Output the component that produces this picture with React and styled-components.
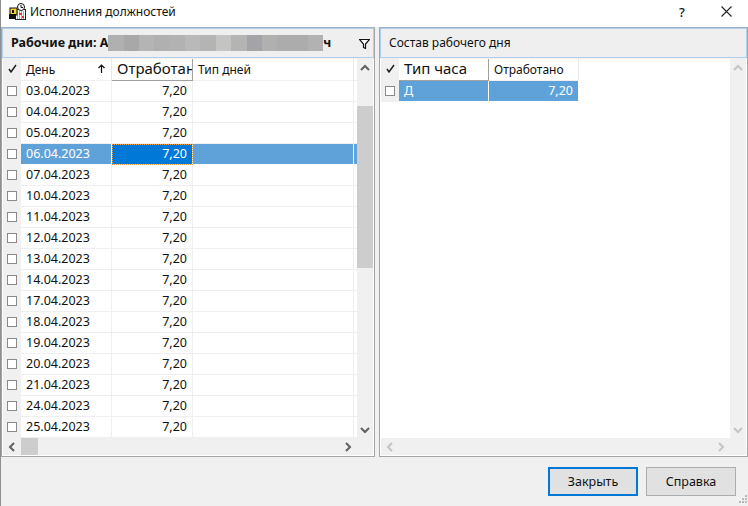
import React from "react";
import styled, { createGlobalStyle } from "styled-components";

const GlobalStyle = createGlobalStyle`
  html, body {
    margin: 0;
    padding: 0;
    background: #f0f0f0;
  }
  * {
    box-sizing: border-box;
  }
`;

const Window = styled.div`
  width: 748px;
  height: 506px;
  display: flex;
  flex-direction: column;
  overflow: hidden;
  background: #f0f0f0;
  border-left: 1px solid #8f8f8f;
  font-family: "Noto Sans", "Open Sans", sans-serif;
  font-size: 12.5px;
  color: #111;
`;

const TitleBar = styled.div`
  height: 27px;
  flex: none;
  display: flex;
  align-items: center;
  background: #fff;
  padding: 0 0 4px 8px;
`;

const TitleText = styled.span`
  margin-left: 4px;
  font-size: 12px;
`;

const TitleButton = styled.div`
  display: flex;
  align-items: center;
  justify-content: center;
  width: 12px;
  margin-right: ${(p) => p.$gap}px;
  font-size: 13px;
  font-weight: 500;
`;

const TitleSpacer = styled.div`
  flex: 1;
`;

const Panels = styled.div`
  height: 429px;
  flex: none;
  display: grid;
  grid-template-columns: 374px 369px;
  column-gap: 4px;
`;

const Panel = styled.div`
  display: flex;
  flex-direction: column;
  border: 1px solid #a5a5a5;
  border-top-color: #a0b0c0;
  background: #f0f0f0;
  min-width: 0;
`;

const PanelHeader = styled.div`
  height: 30px;
  flex: none;
  display: flex;
  align-items: center;
  padding: 0 3px 1px 8px;
  background: #efefef;
  border: 1px solid #afcfee;
  font-weight: ${(p) => (p.$bold ? 700 : 400)};
  font-size: ${(p) => (p.$bold ? 12.5 : 12)}px;
`;

const Redacted = styled.div`
  display: flex;
  width: 215px;
  height: 16px;
  flex: none;
`;

const Blur = styled.div`
  flex: 1;
`;

const HeaderEnd = styled.div`
  margin-left: auto;
  display: flex;
  padding-top: 2px;
`;

const GridArea = styled.div`
  flex: 1;
  display: grid;
  grid-template-columns: 1fr 16px;
  grid-template-rows: 1fr 17px;
  margin-top: 1px;
  min-height: 0;
  border: 1px solid #fff;
  border-top: none;
`;

const TableBox = styled.div`
  background: #fff;
  overflow: hidden;
  min-height: 0;
`;

const Row = styled.div`
  display: grid;
  grid-template-columns: ${(p) => p.$cols};
  height: ${(p) => p.$height || 21}px;
`;

const CheckCell = styled.div`
  background: #f0f0f0;
  display: flex;
  align-items: center;
  justify-content: center;
  padding-bottom: ${(p) => (p.$head ? 3 : 2)}px;
`;

const CheckBox = styled.div`
  width: 10px;
  height: 10px;
  background: #fff;
  border: 1px solid #8a8a8a;
`;

const HeadCell = styled.div`
  position: relative;
  display: flex;
  align-items: center;
  padding: 0 0 ${(p) => (p.$large ? 3 : 0)}px 5px;
  overflow: hidden;
  white-space: nowrap;
  background: #fff;
  font-size: ${(p) => (p.$large ? 15 : 12)}px;
  border-right: 1px solid ${(p) => (p.$sorted ? "#a0a0a0" : "#e8e8e8")};
  border-bottom: 1px solid ${(p) => (p.$sorted ? "#a0a0a0" : "#f0f0f0")};
`;

const SortArrow = styled.svg`
  position: absolute;
  right: 6px;
  top: 5px;
`;

const Cell = styled.div`
  display: flex;
  align-items: center;
  justify-content: ${(p) => (p.$right ? "flex-end" : "flex-start")};
  padding: 0 5px 2px;
  white-space: nowrap;
  overflow: hidden;
  background: ${(p) => (p.$focus ? "#0078d7" : p.$selected ? "#5fa2d9" : "#fff")};
  color: ${(p) => (p.$selected || p.$focus ? "#fff" : "#111")};
  border-right: 1px solid ${(p) => (p.$selected ? "#fff" : "#efefef")};
  border-bottom: 1px solid ${(p) => (p.$selected ? "#fff" : "#efefef")};
  outline: ${(p) => (p.$focus ? "1px dotted #f0a040" : "none")};
  outline-offset: -1px;
`;

const VScroll = styled.div`
  display: flex;
  flex-direction: column;
  align-items: stretch;
  background: #f0f0f0;
`;

const HScroll = styled.div`
  display: flex;
  align-items: stretch;
  background: #f0f0f0;
`;

const ScrollButton = styled.div`
  flex: none;
  display: flex;
  align-items: center;
  justify-content: center;
  height: ${(p) => (p.$wide ? "auto" : "17px")};
  width: ${(p) => (p.$wide ? "18px" : "auto")};
`;

const Gap = styled.div`
  flex: ${(p) => (p.$size ? `0 0 ${p.$size}px` : 1)};
`;

const Thumb = styled.div`
  flex: 0 0 ${(p) => p.$size}px;
  background: #cdcdcd;
`;

const Corner = styled.div`
  background: #f0f0f0;
`;

const Footer = styled.div`
  flex: 1;
  display: flex;
  justify-content: flex-end;
  gap: 8px;
  padding: 11px 12px 0 0;
  position: relative;
`;

const Button = styled.div`
  width: 90px;
  height: 29px;
  display: flex;
  align-items: center;
  justify-content: center;
  background: #e1e1e1;
  font-size: 12.5px;
  border: ${(p) => (p.$primary ? "2px solid #0078d7" : "1px solid #adadad")};
`;

const Grip = styled.svg`
  position: absolute;
  right: 0;
  bottom: 0;
`;

const dates = [
  "03.04.2023", "04.04.2023", "05.04.2023", "06.04.2023", "07.04.2023", "10.04.2023",
  "11.04.2023", "12.04.2023", "13.04.2023", "14.04.2023", "17.04.2023", "18.04.2023",
  "19.04.2023", "20.04.2023", "21.04.2023", "24.04.2023", "25.04.2023",
];

const blurTones = ["#b0b0b0", "#a8a8a8", "#b4b4b4", "#b0b0b0", "#b2b2b2", "#b9b9b9", "#b4b4b4", "#c4c4c2", "#b4b4b4", "#a4a4a8", "#b0b0b0", "#acacac", "#acacac", "#b2b2b2"];

const leftCols = "18px 91px 81px 161px 1fr";
const rightCols = "18px 90px 90px 1fr";

const Chevron = ({ dir, color = "#606060" }) => {
  const points = {
    up: "1,6 5,2 9,6",
    down: "1,2 5,6 9,2",
    left: "6,1 2,5 6,9",
    right: "2,1 6,5 2,9",
  }[dir];
  return (
    <svg width="10" height="10" viewBox={dir === "up" || dir === "down" ? "0 -1 10 10" : "-1 0 10 10"}>
      <polyline points={points} fill="none" stroke={color} strokeWidth="2" />
    </svg>
  );
};

const Tick = () => (
  <svg width="9" height="9" viewBox="0 0 9 9">
    <path d="M1 5 L3 8 L8 1" fill="none" stroke="#1a1a1a" strokeWidth="1.4" />
  </svg>
);

const AppIcon = () => (
  <svg width="17" height="17" viewBox="0 0 17 17">
    <rect x="6.5" y="6.5" width="10" height="10" fill="#fff" stroke="#222" />
    <path d="M8 9 H16 M8 11 H16 M8 13 H16 M8 15 H16" stroke="#555" strokeDasharray="1 1" />
    <rect x="10" y="10" width="3" height="2" fill="#d33" />
    <rect x="13" y="13" width="2" height="2" fill="#d33" />
    <rect x="1" y="5" width="7" height="7" fill="#f4d33a" stroke="#111" />
    <rect x="0" y="11" width="7" height="5" fill="#111" />
    <rect x="3" y="7" width="2" height="3" fill="#111" />
    <circle cx="12" cy="4" r="3.5" fill="#fff" stroke="#111" />
    <path d="M12 2 V4.5 H14" fill="none" stroke="#111" />
  </svg>
);

const FilterIcon = () => (
  <svg width="11" height="10" viewBox="0 0 11 10">
    <path d="M0.5 0.5 H10.5 L6.5 5 V9.5 L4.5 8.5 V5 Z" fill="#fff" stroke="#111" strokeWidth="1.2" />
  </svg>
);

const Scrollbars = ({ disabled, thumbV, thumbH }) => {
  const color = disabled ? "#c4c4c4" : "#606060";
  return (
    <>
      <VScroll>
        <ScrollButton><Chevron dir="up" color={color} /></ScrollButton>
        {thumbV && <Gap $size={30} />}
        {thumbV && <Thumb $size={162} />}
        <Gap />
        <ScrollButton><Chevron dir="down" color={color} /></ScrollButton>
      </VScroll>
      <HScroll>
        <ScrollButton $wide><Chevron dir="left" color={color} /></ScrollButton>
        {thumbH && <Thumb $size={17} />}
        <Gap />
        <ScrollButton $wide><Chevron dir="right" color={color} /></ScrollButton>
      </HScroll>
      <Corner />
    </>
  );
};

const App = () => {
  return (
    <Window>
      <GlobalStyle />
      <TitleBar>
        <AppIcon />
        <TitleText>Исполнения должностей</TitleText>
        <TitleSpacer />
        <TitleButton $gap={32}>?</TitleButton>
        <TitleButton $gap={16}>
          <svg width="11" height="11" viewBox="0 0 11 11">
            <path d="M0.5 0.5 L10.5 10.5 M10.5 0.5 L0.5 10.5" stroke="#222" strokeWidth="1.1" />
          </svg>
        </TitleButton>
      </TitleBar>
      <Panels>
        <Panel>
          <PanelHeader $bold>
            Рабочие дни: А
            <Redacted>
              {blurTones.map((tone, i) => (
                <Blur key={i} style={{ background: tone }} />
              ))}
            </Redacted>
            ч
            <HeaderEnd><FilterIcon /></HeaderEnd>
          </PanelHeader>
          <GridArea>
            <TableBox>
              <Row $cols={leftCols} $height={22}>
                <CheckCell $head><Tick /></CheckCell>
                <HeadCell>
                  День
                  <SortArrow width="7" height="9" viewBox="0 0 7 9">
                    <path d="M3.5 9 V1 M0.5 4 L3.5 1 L6.5 4" fill="none" stroke="#111" strokeWidth="1.2" />
                  </SortArrow>
                </HeadCell>
                <HeadCell $large $sorted>Отработано</HeadCell>
                <HeadCell>Тип дней</HeadCell>
                <HeadCell />
              </Row>
              {dates.map((d) => {
                const selected = d === "06.04.2023";
                return (
                  <Row key={d} $cols={leftCols}>
                    <CheckCell><CheckBox /></CheckCell>
                    <Cell $selected={selected}>{d}</Cell>
                    <Cell $right $focus={selected}>7,20</Cell>
                    <Cell $selected={selected} />
                    <Cell $selected={selected} />
                  </Row>
                );
              })}
            </TableBox>
            <Scrollbars thumbV thumbH />
          </GridArea>
        </Panel>
        <Panel>
          <PanelHeader>Состав рабочего дня</PanelHeader>
          <GridArea>
            <TableBox>
              <Row $cols={rightCols} $height={22}>
                <CheckCell $head><Tick /></CheckCell>
                <HeadCell $large $sorted>Тип часа</HeadCell>
                <HeadCell>Отработано</HeadCell>
              </Row>
              <Row $cols={rightCols}>
                <CheckCell><CheckBox /></CheckCell>
                <Cell $selected>Д</Cell>
                <Cell $selected $right>7,20</Cell>
              </Row>
            </TableBox>
            <Scrollbars disabled />
          </GridArea>
        </Panel>
      </Panels>
      <Footer>
        <Button $primary>Закрыть</Button>
        <Button>Справка</Button>
        <Grip width="12" height="12" viewBox="0 0 12 12">
          <g fill="#b8b8b8">
            <rect x="9" y="1" width="2" height="2" />
            <rect x="6" y="4" width="2" height="2" />
            <rect x="9" y="4" width="2" height="2" />
            <rect x="3" y="7" width="2" height="2" />
            <rect x="6" y="7" width="2" height="2" />
            <rect x="9" y="7" width="2" height="2" />
          </g>
        </Grip>
      </Footer>
    </Window>
  );
};

export default App;
